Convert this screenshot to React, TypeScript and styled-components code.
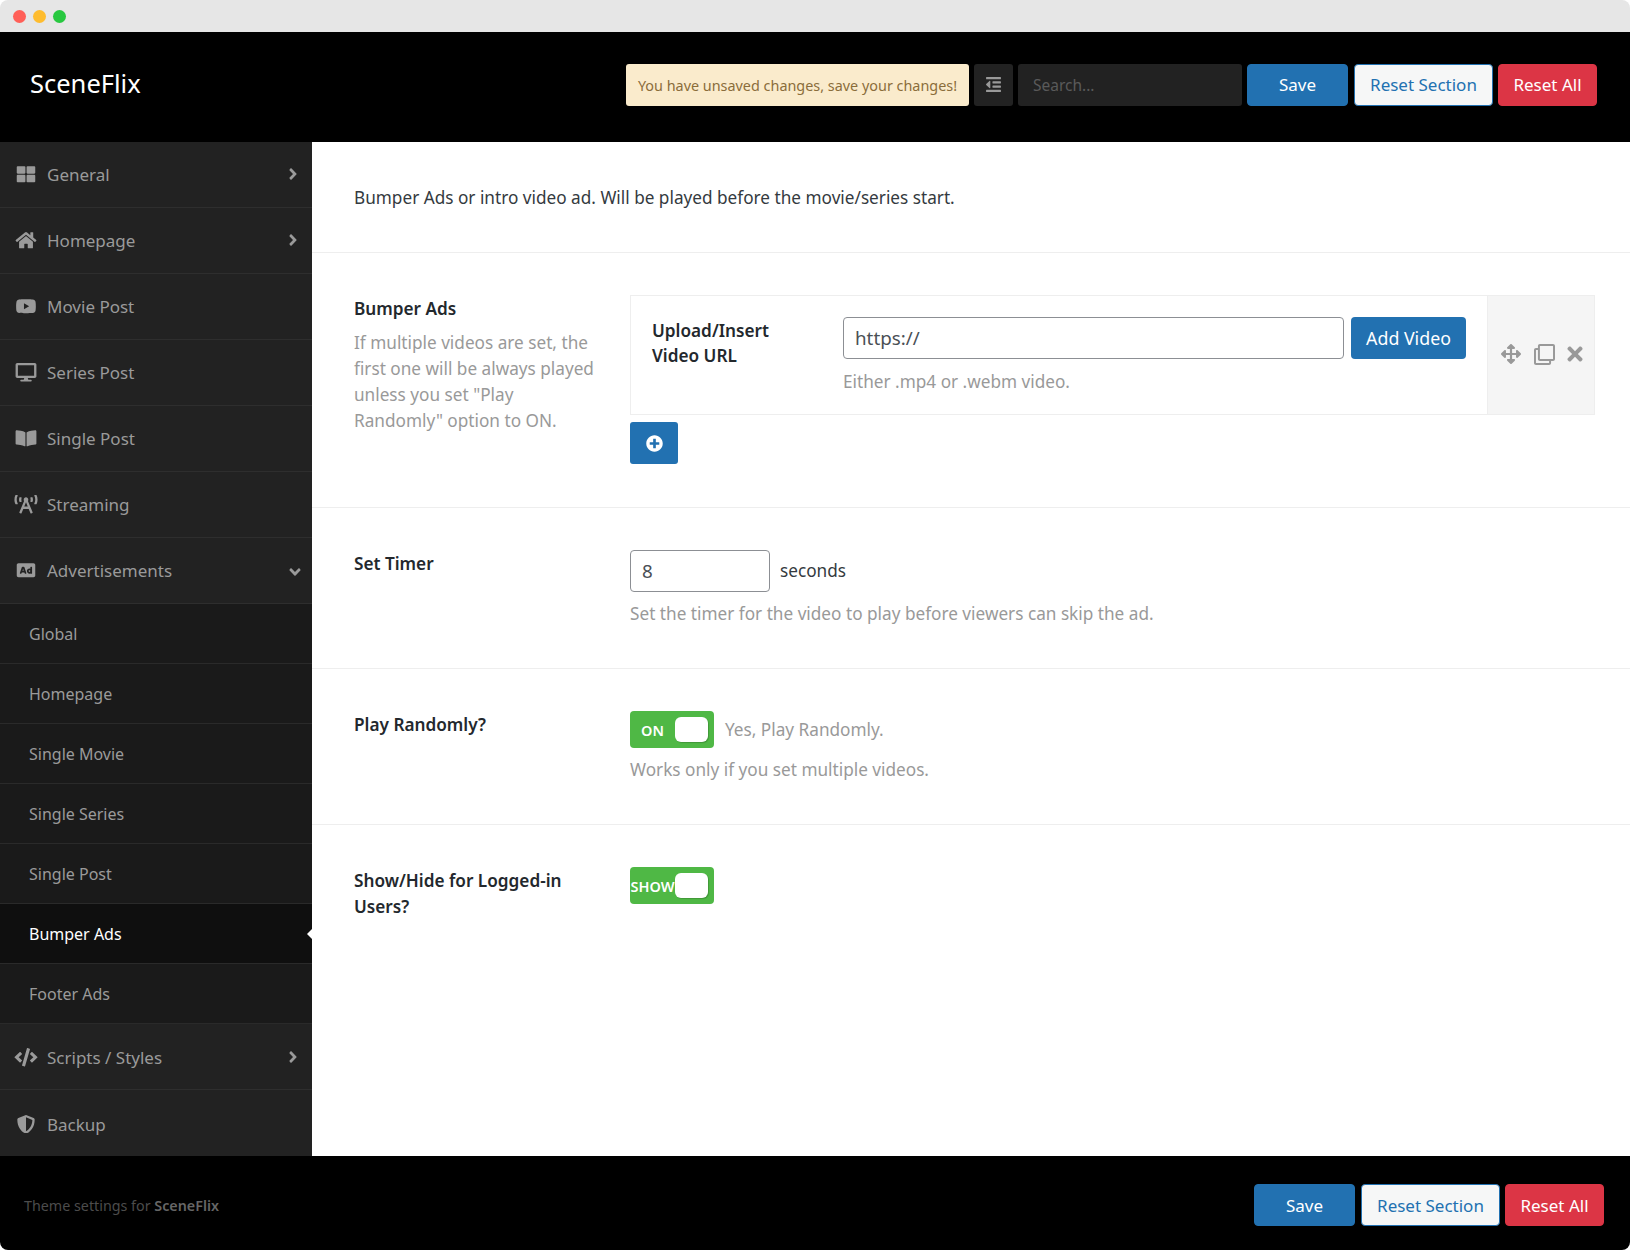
import React from "react";
import styled, { createGlobalStyle } from "styled-components";
import {
  FaAd,
  FaAngleDown,
  FaAngleRight,
  FaArrowsAlt,
  FaBookOpen,
  FaBroadcastTower,
  FaCode,
  FaDesktop,
  FaHome,
  FaOutdent,
  FaPlusCircle,
  FaRegClone,
  FaShieldAlt,
  FaThLarge,
  FaTimes,
  FaYoutube,
} from "react-icons/fa";

const GlobalStyle = createGlobalStyle`
  html, body {
    margin: 0;
    padding: 0;
    background: #fff;
    font-family: "Noto Sans", "Open Sans", sans-serif;
  }
  * {
    box-sizing: border-box;
  }
`;

const topMenu = [
  { label: "General", icon: <FaThLarge />, arrow: "right" },
  { label: "Homepage", icon: <FaHome />, arrow: "right" },
  { label: "Movie Post", icon: <FaYoutube /> },
  { label: "Series Post", icon: <FaDesktop /> },
  { label: "Single Post", icon: <FaBookOpen /> },
  { label: "Streaming", icon: <FaBroadcastTower /> },
  { label: "Advertisements", icon: <FaAd />, arrow: "down" },
];

const subMenu = [
  "Global",
  "Homepage",
  "Single Movie",
  "Single Series",
  "Single Post",
  "Bumper Ads",
  "Footer Ads",
];

function Actions() {
  return (
    <>
      <SaveButton>Save</SaveButton>
      <ResetSection>Reset Section</ResetSection>
      <ResetAll>Reset All</ResetAll>
    </>
  );
}

function App() {
  return (
    <Window>
      <GlobalStyle />
      <TitleBar>
        <Dot $color="#ff5f57" />
        <Dot $color="#febc2e" />
        <Dot $color="#28c840" />
      </TitleBar>

      <Header>
        <Brand>SceneFlix</Brand>
        <Toolbar>
          <Notice>You have unsaved changes, save your changes!</Notice>
          <ExpandButton>
            <FaOutdent size={17} />
          </ExpandButton>
          <Search placeholder="Search..." />
          <Actions />
        </Toolbar>
      </Header>

      <Body>
        <Sidebar>
          {topMenu.map((item) => (
            <MenuItem key={item.label}>
              <MenuIcon>{item.icon}</MenuIcon>
              <span>{item.label}</span>
              {item.arrow === "right" && (
                <MenuArrow>
                  <FaAngleRight size={18} />
                </MenuArrow>
              )}
              {item.arrow === "down" && (
                <MenuArrow $down>
                  <FaAngleDown size={18} />
                </MenuArrow>
              )}
            </MenuItem>
          ))}
          {subMenu.map((label) => (
            <SubItem key={label} $active={label === "Bumper Ads"}>
              {label}
            </SubItem>
          ))}
          <LowerItem>
            <MenuIcon>
              <FaCode />
            </MenuIcon>
            <span>Scripts / Styles</span>
            <MenuArrow>
              <FaAngleRight size={18} />
            </MenuArrow>
          </LowerItem>
          <LowerItem>
            <MenuIcon>
              <FaShieldAlt />
            </MenuIcon>
            <span>Backup</span>
          </LowerItem>
        </Sidebar>

        <Content>
          <Intro>
            Bumper Ads or intro video ad. Will be played before the movie/series
            start.
          </Intro>

          <Row $bottom={43}>
            <div>
              <Label>Bumper Ads</Label>
              <Description>
                If multiple videos are set, the first one will be always played
                unless you set "Play Randomly" option to ON.
              </Description>
            </div>
            <div>
              <Repeater>
                <RepeaterMain>
                  <RepeaterLabel>Upload/Insert Video URL</RepeaterLabel>
                  <div>
                    <UrlLine>
                      <UrlInput defaultValue="https://" />
                      <AddVideo>Add Video</AddVideo>
                    </UrlLine>
                    <Hint $gap={10}>Either .mp4 or .webm video.</Hint>
                  </div>
                </RepeaterMain>
                <RepeaterTools>
                  <FaArrowsAlt size={20} />
                  <FaRegClone size={21} />
                  <FaTimes size={22} />
                </RepeaterTools>
              </Repeater>
              <AddRow>
                <FaPlusCircle size={17} />
              </AddRow>
            </div>
          </Row>

          <Row>
            <Label>Set Timer</Label>
            <div>
              <TimerLine>
                <TimerInput defaultValue="8" />
                <span>seconds</span>
              </TimerLine>
              <Hint>
                Set the timer for the video to play before viewers can skip the
                ad.
              </Hint>
            </div>
          </Row>

          <Row>
            <Label>Play Randomly?</Label>
            <div>
              <ToggleLine>
                <Toggle>
                  <ToggleText>ON</ToggleText>
                  <Knob />
                </Toggle>
                <ToggleNote>Yes, Play Randomly.</ToggleNote>
              </ToggleLine>
              <Hint>Works only if you set multiple videos.</Hint>
            </div>
          </Row>

          <Row $last>
            <Label>Show/Hide for Logged-in Users?</Label>
            <div>
              <Toggle>
                <ToggleText>SHOW</ToggleText>
                <Knob />
              </Toggle>
            </div>
          </Row>
        </Content>
      </Body>

      <Footer>
        <FooterNote>
          Theme settings for <strong>SceneFlix</strong>
        </FooterNote>
        <FooterActions>
          <Actions />
        </FooterActions>
      </Footer>
    </Window>
  );
}

export default App;

const Window = styled.div`
  width: 1630px;
  height: 1250px;
  display: flex;
  flex-direction: column;
  overflow: hidden;
  border-radius: 8px;
  background: #fff;
`;

const TitleBar = styled.div`
  height: 32px;
  flex: none;
  display: flex;
  align-items: center;
  gap: 7px;
  padding: 1px 0 0 13px;
  background: #e6e6e6;
`;

const Dot = styled.span<{ $color: string }>`
  width: 13px;
  height: 13px;
  border-radius: 50%;
  background: ${(p) => p.$color};
`;

const Header = styled.header`
  height: 110px;
  flex: none;
  display: flex;
  align-items: center;
  justify-content: space-between;
  padding: 0 33px 0 30px;
  background: #000;
`;

const Brand = styled.div`
  color: #fff;
  font-size: 25.5px;
  line-height: 32px;
  margin-top: -9px;
`;

const Toolbar = styled.div`
  display: flex;
  align-items: center;
  gap: 5px;
  margin-top: -5px;
`;

const Notice = styled.div`
  width: 343px;
  height: 42px;
  display: flex;
  align-items: center;
  justify-content: center;
  padding-top: 1px;
  border-radius: 3px;
  background: #faebcc;
  color: #8a6d3b;
  font-size: 14.4px;
  white-space: nowrap;
`;

const ExpandButton = styled.button`
  width: 39px;
  height: 42px;
  display: flex;
  align-items: center;
  justify-content: center;
  padding: 0;
  border: 0;
  border-radius: 3px;
  background: #222;
  color: #999;
`;

const Search = styled.input`
  width: 224px;
  height: 42px;
  padding: 0 15px;
  border: 0;
  border-radius: 3px;
  background: #222;
  color: #999;
  font: 15.5px "Noto Sans", sans-serif;
  &::placeholder {
    color: #5a5a5a;
    opacity: 1;
  }
`;

const BaseButton = styled.button`
  height: 42px;
  padding: 0;
  border-radius: 4px;
  font: 17px "Noto Sans", sans-serif;
  white-space: nowrap;
`;

const SaveButton = styled(BaseButton)`
  width: 101px;
  border: 1px solid #2271b1;
  background: #2271b1;
  color: #fff;
`;

const ResetSection = styled(BaseButton)`
  width: 139px;
  margin-left: 1px;
  border: 1px solid #2271b1;
  background: #f6f7f7;
  color: #2271b1;
`;

const ResetAll = styled(BaseButton)`
  width: 99px;
  border: 1px solid #dc3545;
  background: #dc3545;
  color: #fff;
`;

const Body = styled.div`
  height: 1014px;
  flex: none;
  display: flex;
`;

const Sidebar = styled.nav`
  width: 312px;
  flex: none;
  display: flex;
  flex-direction: column;
  background: #222;
`;

const MenuItem = styled.div`
  height: 66px;
  flex: none;
  display: flex;
  align-items: center;
  padding: 0 10px 0 14px;
  border-bottom: 1px solid #2e2e2e;
  background: #222;
  color: #9a9a9a;
  font-size: 17px;
`;

const LowerItem = styled(MenuItem)`
  padding-top: 2px;
  &:last-child {
    border-bottom: 0;
  }
`;

const MenuIcon = styled.span`
  width: 24px;
  height: 22px;
  flex: none;
  margin-right: 9px;
  display: flex;
  align-items: center;
  justify-content: center;
  svg {
    width: 24px;
    height: 18.5px;
    flex: none;
  }
`;

const MenuArrow = styled.span<{ $down?: boolean }>`
  margin-left: auto;
  display: flex;
  margin-top: ${(p) => (p.$down ? "3px" : "-2px")};
  margin-right: ${(p) => (p.$down ? "-2px" : "0")};
`;

const SubItem = styled.div<{ $active?: boolean }>`
  position: relative;
  height: 60px;
  flex: none;
  display: flex;
  align-items: center;
  padding-left: 29px;
  border-bottom: 1px solid #2a2a2a;
  background: ${(p) => (p.$active ? "#0f0f0f" : "#1a1a1a")};
  color: ${(p) => (p.$active ? "#fff" : "#9a9a9a")};
  font-size: 16px;
  ${(p) =>
    p.$active &&
    `&::after {
      content: "";
      position: absolute;
      right: 0;
      top: 50%;
      margin-top: -5px;
      border: 5px solid transparent;
      border-left: 0;
      border-right-color: #fff;
    }`}
`;

const Content = styled.main`
  flex: 1;
  min-width: 0;
  color: #23282d;
  font-size: 17.2px;
  line-height: 26px;
`;

const Intro = styled.div`
  height: 111px;
  display: flex;
  align-items: center;
  padding: 2px 42px 0;
  border-bottom: 1px solid #eee;
  color: #343a40;
`;

const Row = styled.section<{ $last?: boolean; $bottom?: number }>`
  display: grid;
  grid-template-columns: 276px 1fr;
  padding: 42px 35px ${(p) => p.$bottom ?? 41}px 42px;
  border-bottom: ${(p) => (p.$last ? "0" : "1px solid #eee")};
`;

const Label = styled.div`
  width: 230px;
  padding-top: 1px;
  font-weight: 600;
  color: #23282d;
`;

const Description = styled.p`
  margin: 8px 0 0;
  width: 245px;
  color: #999;
`;

const Repeater = styled.div`
  height: 120px;
  display: flex;
  border: 1px solid #eee;
`;

const RepeaterMain = styled.div`
  flex: 1;
  display: grid;
  grid-template-columns: 191px 1fr;
  padding: 21px 20px 0 21px;
`;

const RepeaterLabel = styled.div`
  width: 130px;
  font-weight: 600;
  line-height: 25px;
  padding-top: 1px;
`;

const UrlLine = styled.div`
  display: flex;
  gap: 7px;
`;

const UrlInput = styled.input`
  width: 501px;
  height: 42px;
  padding: 0 11px;
  border: 1px solid #8c8f94;
  border-radius: 4px;
  color: #4a4f55;
  font: 18.8px "Noto Sans", sans-serif;
`;

const AddVideo = styled(BaseButton)`
  width: 115px;
  border: 0;
  background: #2271b1;
  color: #fff;
  font-size: 17.8px;
`;

const Hint = styled.div<{ $gap?: number }>`
  margin-top: ${(p) => p.$gap ?? 9}px;
  color: #999;
`;

const RepeaterTools = styled.div`
  width: 107px;
  flex: none;
  display: flex;
  align-items: center;
  gap: 13px;
  padding: 0 0 2px 13px;
  border-left: 1px solid #eee;
  background: #f5f5f5;
  color: #999;
  svg:last-child {
    margin-left: -4px;
  }
`;

const AddRow = styled.button`
  width: 48px;
  height: 42px;
  margin-top: 7px;
  display: block;
  padding: 0;
  border: 0;
  border-radius: 3px;
  background: #2271b1;
  color: #fff;
  svg {
    display: block;
    margin: 0 auto;
  }
`;

const TimerLine = styled.div`
  display: flex;
  align-items: center;
  gap: 10px;
  color: #343a40;
`;

const TimerInput = styled(UrlInput)`
  width: 140px;
`;

const ToggleLine = styled.div`
  display: flex;
  align-items: center;
  gap: 11px;
  height: 37px;
`;

const Toggle = styled.div`
  width: 84px;
  height: 37px;
  display: flex;
  align-items: center;
  border-radius: 4px;
  background: #4fb845;
`;

const ToggleText = styled.span`
  width: 45px;
  flex: none;
  display: flex;
  justify-content: center;
  color: #fff;
  font-size: 14.5px;
  font-weight: 600;
`;

const Knob = styled.span`
  width: 33px;
  height: 25px;
  border-radius: 6px;
  background: #fff;
  box-shadow: 1px 1px 1px rgba(0, 0, 0, 0.18);
`;

const ToggleNote = styled.span`
  color: #999;
`;

const Footer = styled.footer`
  flex: 1;
  display: flex;
  align-items: center;
  justify-content: space-between;
  padding: 4px 26px 0 24px;
  background: #000;
`;

const FooterNote = styled.div`
  color: #4c4c4c;
  font-size: 14.3px;
  strong {
    font-weight: 600;
    color: #666;
  }
`;

const FooterActions = styled.div`
  display: flex;
  gap: 5px;
`;
